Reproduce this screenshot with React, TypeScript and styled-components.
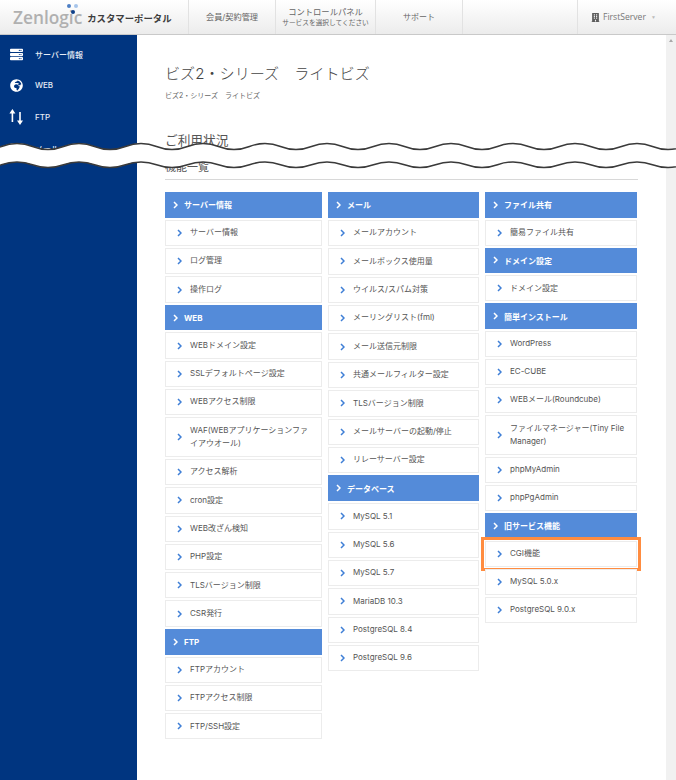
import { Fragment } from "react";
import { FaEnvelope, FaGlobeAfrica, FaServer, FaBuilding } from "react-icons/fa";
import styled, { createGlobalStyle } from "styled-components";

const GlobalStyle = createGlobalStyle`
  html, body {
    margin: 0;
    padding: 0;
    background: #fff;
  }
  body {
    font-family: Inter, "Noto Sans CJK JP", "Liberation Sans", sans-serif;
    color: #444;
  }
  * {
    box-sizing: border-box;
  }
`;

const Page = styled.div`
  position: relative;
  width: 676px;
  height: 780px;
  overflow: hidden;
  display: flex;
  flex-direction: column;
`;

const TopBar = styled.header`
  flex: 0 0 35px;
  display: flex;
  background: linear-gradient(#fff, #ececec);
  border-bottom: 1px solid #c9c9c9;
`;

const Brand = styled.div`
  flex: 0 0 188px;
  display: flex;
  align-items: center;
  padding: 2px 0 0 13px;
`;

const LogoText = styled.span`
  position: relative;
  font-family: "Open Sans", sans-serif;
  font-size: 17.3px;
  font-weight: 600;
  color: #b0b0b0;
  line-height: 20px;
`;

const LogoDot = styled.i<{ $x: number; $y: number; $color: string }>`
  position: absolute;
  left: ${(p) => p.$x}px;
  top: ${(p) => p.$y}px;
  width: 4px;
  height: 4px;
  border-radius: 50%;
  background: ${(p) => p.$color};
`;

const BrandTitle = styled.span`
  margin-left: 5px;
  font-size: 9.4px;
  font-weight: 700;
  color: #3d3d3d;
  white-space: nowrap;
`;

const NavCell = styled.div<{ $width: number }>`
  flex: 0 0 ${(p) => p.$width}px;
  display: flex;
  flex-direction: column;
  align-items: center;
  justify-content: center;
  border-left: 1px solid #e2e2e2;
  color: #666;
  white-space: nowrap;
`;

const NavLabel = styled.span<{ $size: number }>`
  font-size: ${(p) => p.$size}px;
  line-height: 12px;
`;

const NavHint = styled.span`
  font-size: 6.7px;
  line-height: 10px;
`;

const UserCell = styled.div`
  flex: 1;
  display: flex;
  align-items: center;
  gap: 3px;
  padding-left: 13px;
  border-left: 1px solid #e2e2e2;
  font-family: "Open Sans", sans-serif;
  font-size: 8.6px;
  color: #777;

  svg {
    color: #5c5c5c;
    font-size: 9px;
  }
`;

const Caret = styled.span`
  margin-left: 2px;
  font-size: 5px;
  color: #bbb;
`;

const Body = styled.div`
  flex: 1;
  display: flex;
  min-height: 0;
`;

const Sidebar = styled.nav`
  flex: 0 0 137px;
  padding-top: 3.4px;
  background: #003580;
`;

const SideRow = styled.div`
  height: 31.4px;
  display: flex;
  align-items: center;
  color: #fff;

  svg {
    flex: 0 0 auto;
  }
`;

const SideIcon = styled.span`
  flex: 0 0 35px;
  display: flex;
  justify-content: center;
  padding-right: 3px;
  font-size: 13px;
`;

const SideLabel = styled.span`
  font-size: 8px;
  font-weight: 500;
  color: #e6ecf5;
`;

const Main = styled.main`
  flex: 1;
  padding: 27px 0 0 28px;
`;

const Title = styled.h1`
  margin: 0;
  font-size: 15.1px;
  line-height: 24px;
  font-weight: 300;
  color: #444;
`;

const Crumb = styled.div`
  margin-top: 4px;
  font-size: 7px;
  line-height: 12px;
  color: #666;
`;

const Section = styled.h2`
  margin: 29px 0 0;
  font-size: 12.7px;
  line-height: 20px;
  font-weight: 400;
  color: #555;
`;

const SubSection = styled.h3`
  margin: 7px 0 0;
  width: 473px;
  height: 22px;
  font-size: 11px;
  line-height: 18px;
  font-weight: 400;
  color: #555;
  border-bottom: 1px solid #d8d8d8;
`;

const Columns = styled.div`
  margin-top: 12px;
  display: grid;
  grid-template-columns: 157px 151px 152px;
  column-gap: 6px;
  align-items: start;
`;

const Column = styled.div<{ $pitch: number }>`
  display: flex;
  flex-direction: column;
  row-gap: 2px;
  --item: ${(p) => p.$pitch}px;
`;

const GroupHead = styled.div`
  height: calc(var(--item) - 2.5px);
  display: flex;
  align-items: center;
  gap: 6px;
  padding-left: 8px;
  background: #548bd9;
  color: #fff;
  font-size: 8px;
  font-weight: 700;
`;

const Item = styled.div<{ $active?: boolean }>`
  display: flex;
  align-items: center;
  gap: 8px;
  padding: calc((var(--item) - 17.5px) / 2) 6px calc((var(--item) - 17.5px) / 2) 11px;
  background: #fff;
  border: 1px solid #ececec;
  color: #555;
  font-size: 8px;
  line-height: 13.5px;
  outline: ${(p) => (p.$active ? "3px solid #ff8c40" : "none")};
  outline-offset: ${(p) => (p.$active ? "1px" : "0")};
`;

const Chevron = styled.svg<{ $color: string }>`
  flex: 0 0 5px;
  width: 5px;
  height: 8px;
  color: ${(p) => p.$color};
`;

const ScrollTrack = styled.div`
  flex: 0 0 10px;
  display: flex;
  justify-content: center;
  padding-top: 4px;
  background: #f1f1f1;
`;

const ScrollArrow = styled.span`
  width: 0;
  height: 0;
  border-left: 2px solid transparent;
  border-right: 2px solid transparent;
  border-bottom: 3px solid #a8a8a8;
`;

const Tear = styled.svg`
  position: absolute;
  left: 0;
  top: 140px;
  width: 676px;
  height: 32px;
`;

function Arrow({ color }: { color: string }) {
  return (
    <Chevron $color={color} viewBox="0 0 5 8">
      <path d="M1 1l3 3-3 3" fill="none" stroke="currentColor" strokeWidth="1.5" />
    </Chevron>
  );
}

function UpDownIcon() {
  return (
    <svg width="15" height="16" viewBox="0 0 15 16" fill="#fff">
      <path d="M3.4 0L.4 4.4h2.2V13h1.6V4.4h2.2zM11 16l3-4.4h-2.2V3h-1.6v8.6H8z" />
    </svg>
  );
}

// wave offset: crest every 62px, first crest at x=17
function wave(crestY: number, troughY: number) {
  let d = `M-45 ${crestY}`;
  for (let x = -45; x < 690; x += 62) {
    d += ` C${x + 16} ${crestY} ${x + 15} ${troughY} ${x + 31} ${troughY}`;
    d += ` C${x + 47} ${troughY} ${x + 46} ${crestY} ${x + 62} ${crestY}`;
  }
  return d;
}

function TearBand() {
  const top = wave(3.5, 9.5);
  const bottom = wave(22, 27.5);
  return (
    <Tear viewBox="0 0 676 32">
      <defs>
        <clipPath id="above-bottom">
          <path d={`${bottom} L700 -10 L-45 -10 Z`} />
        </clipPath>
      </defs>
      <path d={`${top} L700 40 L-45 40 Z`} fill="#fff" clipPath="url(#above-bottom)" />
      <path d={top} fill="none" stroke="#3a3a3a" strokeWidth="1.5" />
      <path d={bottom} fill="none" stroke="#3a3a3a" strokeWidth="1.5" />
    </Tear>
  );
}

type Group = { head: string; items: string[] };

const columns: { pitch: number; groups: Group[] }[] = [
  {
    pitch: 28.3,
    groups: [
      { head: "サーバー情報", items: ["サーバー情報", "ログ管理", "操作ログ"] },
      {
        head: "WEB",
        items: [
          "WEBドメイン設定",
          "SSLデフォルトページ設定",
          "WEBアクセス制限",
          "WAF(WEBアプリケーションファイアウオール)",
          "アクセス解析",
          "cron設定",
          "WEB改ざん検知",
          "PHP設定",
          "TLSバージョン制限",
          "CSR発行",
        ],
      },
      { head: "FTP", items: ["FTPアカウント", "FTPアクセス制限", "FTP/SSH設定"] },
    ],
  },
  {
    pitch: 28.38,
    groups: [
      {
        head: "メール",
        items: [
          "メールアカウント",
          "メールボックス使用量",
          "ウイルス/スパム対策",
          "メーリングリスト(fml)",
          "メール送信元制限",
          "共通メールフィルター設定",
          "TLSバージョン制限",
          "メールサーバーの起動/停止",
          "リレーサーバー設定",
        ],
      },
      {
        head: "データベース",
        items: ["MySQL 5.1", "MySQL 5.6", "MySQL 5.7", "MariaDB 10.3", "PostgreSQL 8.4", "PostgreSQL 9.6"],
      },
    ],
  },
  {
    pitch: 28.1,
    groups: [
      { head: "ファイル共有", items: ["簡易ファイル共有"] },
      { head: "ドメイン設定", items: ["ドメイン設定"] },
      {
        head: "簡単インストール",
        items: [
          "WordPress",
          "EC-CUBE",
          "WEBメール(Roundcube)",
          "ファイルマネージャー(Tiny File Manager)",
          "phpMyAdmin",
          "phpPgAdmin",
        ],
      },
      { head: "旧サービス機能", items: ["CGI機能", "MySQL 5.0.x", "PostgreSQL 9.0.x"] },
    ],
  },
];

export default function App() {
  return (
    <>
      <GlobalStyle />
      <Page>
        <TopBar>
          <Brand>
            <LogoText>
              Zenlogic
              <LogoDot $x={54} $y={-4} $color="#4d7fc4" />
              <LogoDot $x={61} $y={-4} $color="#a6c4ea" />
              <LogoDot $x={58} $y={2} $color="#0f3f88" />
            </LogoText>
            <BrandTitle>カスタマーポータル</BrandTitle>
          </Brand>
          <NavCell $width={87}>
            <NavLabel $size={8.2}>会員/契約管理</NavLabel>
          </NavCell>
          <NavCell $width={100}>
            <NavLabel $size={8.3}>コントロールパネル</NavLabel>
            <NavHint>サービスを選択してください</NavHint>
          </NavCell>
          <NavCell $width={87}>
            <NavLabel $size={8}>サポート</NavLabel>
          </NavCell>
          <NavCell $width={115} />
          <UserCell>
            <FaBuilding />
            FirstServer
            <Caret>▼</Caret>
          </UserCell>
        </TopBar>
        <Body>
          <Sidebar>
            <SideRow>
              <SideIcon>
                <FaServer />
              </SideIcon>
              <SideLabel>サーバー情報</SideLabel>
            </SideRow>
            <SideRow>
              <SideIcon>
                <FaGlobeAfrica />
              </SideIcon>
              <SideLabel>WEB</SideLabel>
            </SideRow>
            <SideRow>
              <SideIcon>
                <UpDownIcon />
              </SideIcon>
              <SideLabel>FTP</SideLabel>
            </SideRow>
            <SideRow>
              <SideIcon>
                <FaEnvelope />
              </SideIcon>
              <SideLabel>メール</SideLabel>
            </SideRow>
          </Sidebar>
          <Main>
            <Title>ビズ2・シリーズ　ライトビズ</Title>
            <Crumb>ビズ2・シリーズ　ライトビズ</Crumb>
            <Section>ご利用状況</Section>
            <SubSection>機能一覧</SubSection>
            <Columns>
              {columns.map((col) => (
                <Column key={col.groups[0].head} $pitch={col.pitch}>
                  {col.groups.map((group) => (
                    <Fragment key={group.head}>
                      <GroupHead>
                        <Arrow color="#fff" />
                        {group.head}
                      </GroupHead>
                      {group.items.map((item) => (
                        <Item key={item} $active={item === "CGI機能"}>
                          <Arrow color="#3f7fd6" />
                          <span>{item}</span>
                        </Item>
                      ))}
                    </Fragment>
                  ))}
                </Column>
              ))}
            </Columns>
          </Main>
          <ScrollTrack>
            <ScrollArrow />
          </ScrollTrack>
        </Body>
        <TearBand />
      </Page>
    </>
  );
}
